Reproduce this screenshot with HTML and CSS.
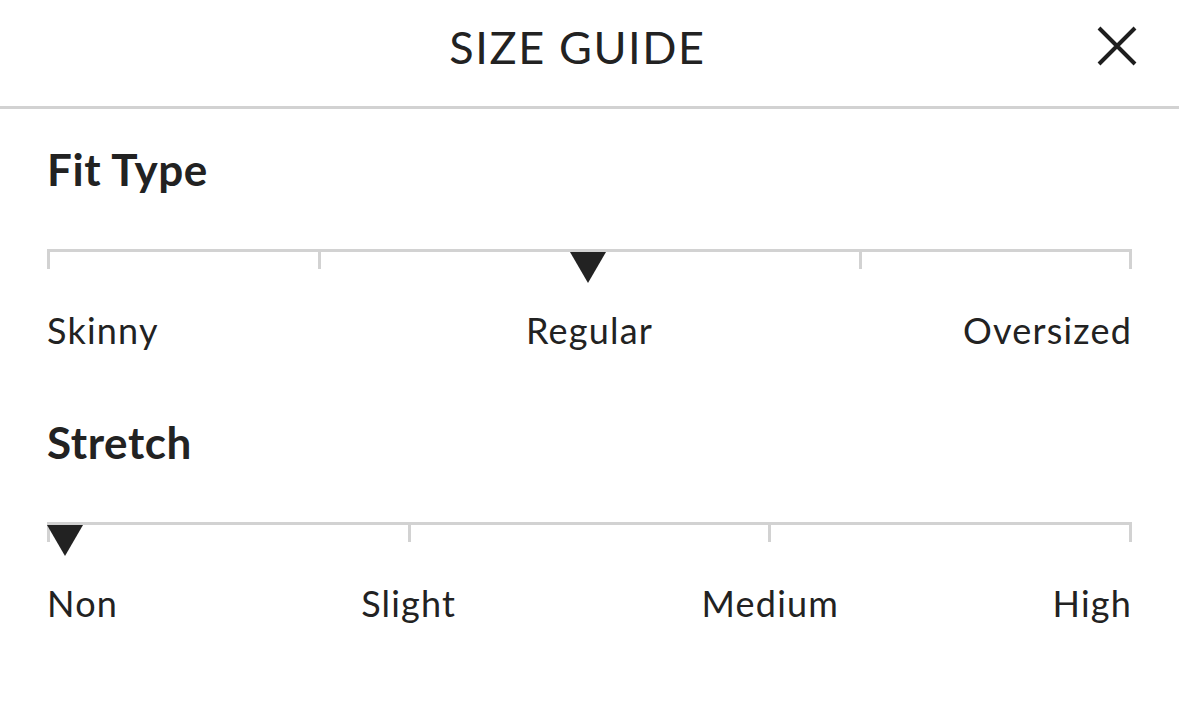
FILE: index.html
```html
<!DOCTYPE html>
<html lang="en">
<head>
  <meta charset="UTF-8">
  <title>Size Guide</title>
  <link rel="stylesheet" href="styles.css">
</head>
<body>

  <header class="guide-header">
    <span></span>
    <h1 class="guide-title">SIZE GUIDE</h1>
    <button class="close-btn" aria-label="Close">
      <svg width="40" height="40" viewBox="0 0 40 40">
        <path d="M2 2 L38 38 M38 2 L2 38" stroke="#1e1e1e" stroke-width="4" fill="none"/>
      </svg>
    </button>
  </header>

  <section class="scale">
    <h2 class="scale-title">Fit Type</h2>
    <div class="track">
      <span class="tick"></span><span class="tick"></span><span class="tick"></span><span class="tick"></span><span class="tick"></span>
      <span class="marker marker-mid"></span>
    </div>
    <div class="labels labels-4">
      <span class="lbl-start">Skinny</span>
      <span class="lbl-mid">Regular</span>
      <span class="lbl-end">Oversized</span>
    </div>
  </section>

  <section class="scale">
    <h2 class="scale-title">Stretch</h2>
    <div class="track">
      <span class="tick"></span><span class="tick"></span><span class="tick"></span><span class="tick"></span>
      <span class="marker marker-start"></span>
    </div>
    <div class="labels labels-6">
      <span class="lbl-start">Non</span>
      <span class="lbl-mid">Slight</span>
      <span class="lbl-mid">Medium</span>
      <span class="lbl-end">High</span>
    </div>
  </section>

</body>
</html>
```

FILE: styles.css
```css
body { margin: 0; font-family: Lato, "Open Sans", sans-serif; color: #222; background: #fff; }

.guide-header {
  display: grid;
  grid-template-columns: 1fr auto 1fr;
  align-items: start;
  height: 106px;
  border-bottom: 3px solid #d2d2d2;
}
.guide-title {
  margin: 0 24px 0 0;
  padding-top: 20px;
  font-size: 45px;
  font-weight: 400;
  line-height: 1.2;
  letter-spacing: 1.6px;
}
.close-btn {
  justify-self: end;
  margin: 26px 42px 0 0;
  padding: 0;
  border: 0;
  background: none;
  width: 40px;
  height: 40px;
}
.close-btn svg { display: block; }

.scale { padding: 0 47px; }
.scale-title {
  margin: 34px 0 53px;
  font-size: 44px;
  font-weight: 700;
  line-height: 1.2;
  letter-spacing: 0.6px;
}
.scale + .scale .scale-title { margin-top: 64px; }

.track {
  position: relative;
  display: flex;
  justify-content: space-between;
  height: 17px;
  border-top: 3px solid #d2d2d2;
}
.tick { width: 3px; background: #d2d2d2; }

.marker {
  position: absolute;
  top: 0;
  width: 0;
  height: 0;
  border-left: 18px solid transparent;
  border-right: 18px solid transparent;
  border-top: 31px solid #222;
}
.marker-mid { left: 50%; margin-left: -20px; }
.marker-start { left: 0; }

.labels {
  display: grid;
  margin-top: 40px;
  font-size: 36px;
  line-height: 1.2;
  letter-spacing: 1.2px;
}
.labels-4 { grid-template-columns: repeat(4, 1fr); }
.labels-6 { grid-template-columns: repeat(6, 1fr); }
.lbl-start { text-align: left; }
.lbl-mid { grid-column: span 2; text-align: center; }
.lbl-end { text-align: right; }
```
